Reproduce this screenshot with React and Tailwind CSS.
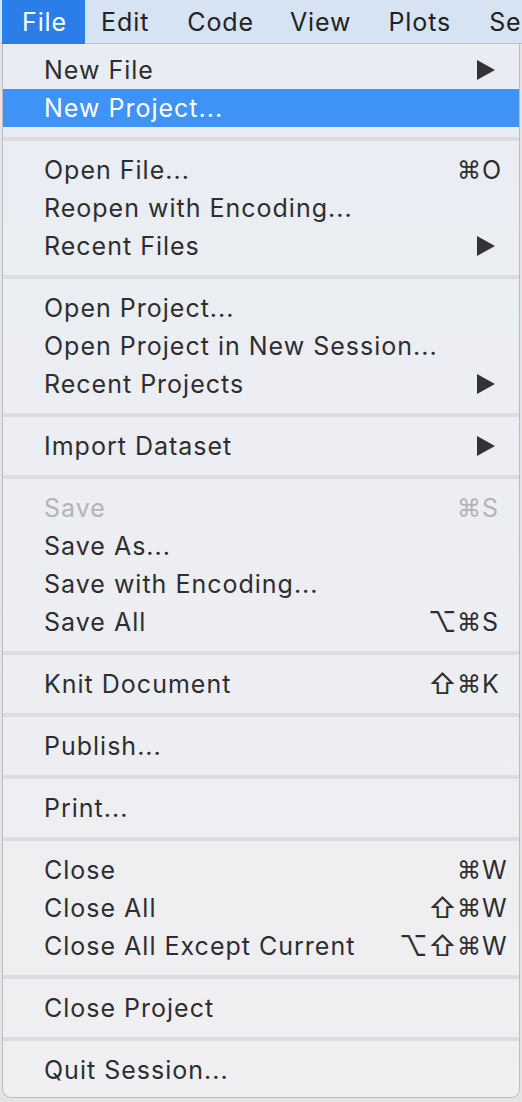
import React from "react";

const font = { fontFamily: "Inter, 'Noto Sans', 'DejaVu Sans', sans-serif" };

// menu model: "sep" marks a separator block
const items = [
  { label: "New File", arrow: true },
  { label: "New Project...", active: true },
  "sep",
  { label: "Open File...", mods: ["⌘"], key: "O" },
  { label: "Reopen with Encoding..." },
  { label: "Recent Files", arrow: true },
  "sep",
  { label: "Open Project..." },
  { label: "Open Project in New Session..." },
  { label: "Recent Projects", arrow: true },
  "sep",
  { label: "Import Dataset", arrow: true },
  "sep",
  { label: "Save", mods: ["⌘"], key: "S", disabled: true },
  { label: "Save As..." },
  { label: "Save with Encoding..." },
  { label: "Save All", mods: ["⌥", "⌘"], key: "S" },
  "sep",
  { label: "Knit Document", mods: ["⇧", "⌘"], key: "K" },
  "sep",
  { label: "Publish..." },
  "sep",
  { label: "Print..." },
  "sep",
  { label: "Close", mods: ["⌘"], key: "W" },
  { label: "Close All", mods: ["⇧", "⌘"], key: "W" },
  { label: "Close All Except Current", mods: ["⌥", "⇧", "⌘"], key: "W" },
  "sep",
  { label: "Close Project" },
  "sep",
  { label: "Quit Session..." },
];

const Arrow = () => (
  <svg width="18" height="20" viewBox="0 0 18 20" className="mr-[24px]">
    <path d="M0 0 L18 10 L0 20 Z" fill="#333336" />
  </svg>
);

const MenuRow = ({ item }) => {
  const color = item.active ? "text-white" : item.disabled ? "text-[#b4b4b6]" : "text-[#2e2e30]";
  return (
    <div
      className={`flex items-center h-[38px] pl-[41px] ${item.active ? "bg-[#3f92f6]" : ""} ${color}`}
    >
      <span className="flex-1 text-[25px] leading-none tracking-[1px] whitespace-nowrap">{item.label}</span>
      {item.arrow && <Arrow />}
      {item.key && (
        <span className="flex items-center text-[25px] leading-none mr-[9px]">
          {item.mods.map((m, i) => (
            <span key={i} className={`w-[24px] ml-[5px] text-center ${m === "⌘" ? "text-[24px]" : "text-[28px]"}`}>{m}</span>
          ))}
          <span className="w-[29px] pl-[1px]">{item.key}</span>
        </span>
      )}
    </div>
  );
};

export default function App() {
  return (
    <div style={font} className="w-[522px] h-[1102px] bg-[#e4e4e6] overflow-hidden">
      <div className="flex items-center h-[44px] pt-[2px] bg-[#d6e3f3] text-[25px] tracking-[0.9px] text-[#222224] border-b border-[#b9c2cc] whitespace-nowrap">
        <div className="ml-[2px] -mt-[2px] h-[44px] flex items-center pt-[2px] pl-[20px] pr-[18px] bg-[#2b7de8] text-white">File</div>
        <div className="ml-[16px]">Edit</div>
        <div className="ml-[38px]">Code</div>
        <div className="ml-[36px]">View</div>
        <div className="ml-[37px]">Plots</div>
        <div className="ml-[38px]">Session</div>
      </div>
      <div className="mx-[2px] w-[518px] pt-[7px] pb-[8px] rounded-b-[9px] border-x border-b border-[#bdbdc0] bg-gradient-to-b from-[#e9edf3] to-[#f0eff1]">
        {items.map((item, i) =>
          item === "sep" ? (
            <div key={i} className="h-[24px] flex items-center">
              <div className="w-full h-[4px] bg-[#dcdde1]" />
            </div>
          ) : (
            <MenuRow key={i} item={item} />
          )
        )}
      </div>
    </div>
  );
}
